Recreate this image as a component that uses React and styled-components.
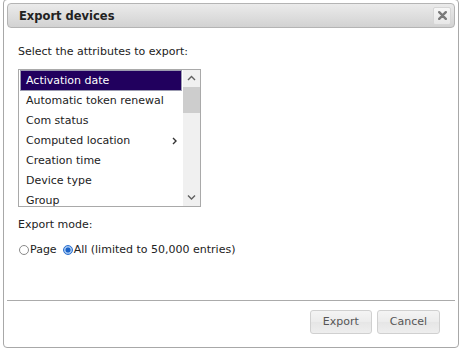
import React from "react";
import styled, { createGlobalStyle } from "styled-components";

const GlobalStyle = createGlobalStyle`
  html, body { margin: 0; padding: 0; background: #fff; }
  body { font-family: "DejaVu Sans", Verdana, sans-serif; font-size: 11px; color: #222; }
`;

const Page = styled.div`
  width: 460px;
  height: 348px;
  overflow: hidden;
  padding-left: 3px;
  box-sizing: border-box;
`;

const Dialog = styled.div`
  margin-top: -1px;
  width: 456px;
  height: 349px;
  box-sizing: border-box;
  border: 1px solid #a8a8a8;
  border-radius: 4px;
  padding: 3px;
  display: flex;
  flex-direction: column;
  background: #fff;
`;

const TitleBar = styled.div`
  height: 25px;
  box-sizing: border-box;
  border: 1px solid #b4b4b4;
  border-radius: 4px;
  background: linear-gradient(#ebebeb, #d2d2d2);
  display: flex;
  align-items: center;
  justify-content: space-between;
  padding: 0 3px 0 11px;
`;

const Title = styled.span`
  font-weight: bold;
  font-size: 11.5px;
  color: #222;
`;

const CloseButton = styled.div`
  width: 18px;
  height: 18px;
  box-sizing: border-box;
  border: 1px solid #d6d6d6;
  border-radius: 2px;
  background: linear-gradient(#f7f7f7, #e7e7e7);
  display: flex;
  align-items: center;
  justify-content: center;
`;

const Content = styled.div`
  flex: 1;
  padding: 17px 11px 0 11px;
  display: flex;
  flex-direction: column;
  align-items: flex-start;
`;

const Label = styled.div`
  line-height: 13px;
  margin-bottom: ${(p) => p.$gap}px;
`;

const ListBox = styled.div`
  width: 183px;
  height: 138px;
  box-sizing: border-box;
  border: 1px solid #a9a9a9;
  display: flex;
  margin-bottom: 11px;
  background: #fff;
`;

const Items = styled.div`
  flex: 1;
  overflow: hidden;
  display: flex;
  flex-direction: column;
`;

const Item = styled.div`
  flex: none;
  height: 20px;
  box-sizing: border-box;
  line-height: 20px;
  padding: 1px 6px 0 6px;
  margin: ${(p) => (p.$selected ? "0 1px 0 1px" : "0")};
  ${(p) =>
    p.$selected
      ? `background: #21005e; color: #fff; border: 1px solid #9b9bb0; line-height: 18px; padding: 0 6px 0 5px; height: 21px; margin-bottom: -1px;`
      : `color: #222; padding-left: 7px;`}
  display: flex;
  justify-content: space-between;
  align-items: center;
  white-space: nowrap;
`;

const ScrollBar = styled.div`
  width: 17px;
  background: #f0f0f0;
  display: flex;
  flex-direction: column;
`;

const ScrollArrow = styled.div`
  height: 17px;
  flex: none;
  display: flex;
  align-items: center;
  justify-content: center;
`;

const Track = styled.div`
  flex: 1;
  display: flex;
  flex-direction: column;
`;

const Thumb = styled.div`
  height: 26px;
  background: #cdcdcd;
`;

const RadioRow = styled.div`
  display: flex;
  align-items: center;
  line-height: 13px;
`;

const RadioOption = styled.label`
  display: inline-flex;
  align-items: center;
  margin-right: ${(p) => p.$gap || 0}px;
`;

const Radio = styled.span`
  width: 10px;
  height: 10px;
  box-sizing: border-box;
  border-radius: 50%;
  margin: 1px 1px 0 1px;
  ${(p) =>
    p.$checked
      ? `border: 1px solid #2a6fd0; background: radial-gradient(circle, #1a62c8 0 2.2px, #9fc3ef 2.8px 100%);`
      : `border: 1px solid #8a8a8a; background: #fff;`}
`;

const ButtonPane = styled.div`
  height: 44px;
  box-sizing: border-box;
  border-top: 1px solid #ababab;
  padding: 9px 15px 0 0;
  display: flex;
  justify-content: flex-end;
  align-items: flex-start;
  gap: 5px;
`;

const Button = styled.button`
  height: 24px;
  padding: 0 12px;
  border: 1px solid #d0d0d0;
  border-radius: 3px;
  background: linear-gradient(#f4f4f4 0%, #ececec 48%, #e6e6e6 52%, #eeeeee 100%);
  color: #555;
  font-family: "DejaVu Sans", Verdana, sans-serif;
  font-size: 11px;
  line-height: 22px;
  cursor: pointer;
`;

const Chevron = ({ dir }) => {
  const d = dir === "up" ? "M1 5 L4.5 1.5 L8 5" : dir === "down" ? "M1 1.5 L4.5 5 L8 1.5" : "M1 1 L4 4 L1 7";
  const w = dir === "right" ? 5 : 9;
  const h = dir === "right" ? 8 : 6.5;
  return (
    <svg width={w} height={h} viewBox={`0 0 ${w} ${h}`}>
      <path d={d} fill="none" stroke={dir === "right" ? "#333" : "#606060"} strokeWidth="1.4" />
    </svg>
  );
};

const items = [
  "Activation date",
  "Automatic token renewal",
  "Com status",
  "Computed location",
  "Creation time",
  "Device type",
  "Group",
];

export default function App() {
  return (
    <>
      <GlobalStyle />
      <Page>
        <Dialog>
          <TitleBar>
            <Title>Export devices</Title>
            <CloseButton>
              <svg width="9" height="9" viewBox="0 0 9 9">
                <path d="M1.2 1.2 L7.8 7.8 M7.8 1.2 L1.2 7.8" stroke="#7a7a7a" strokeWidth="2.4" strokeLinecap="round" />
              </svg>
            </CloseButton>
          </TitleBar>
          <Content>
            <Label $gap={11}>Select the attributes to export:</Label>
            <ListBox>
              <Items>
                {items.map((it, i) => (
                  <Item key={it} $selected={i === 0}>
                    <span>{it}</span>
                    {it === "Computed location" && <Chevron dir="right" />}
                  </Item>
                ))}
              </Items>
              <ScrollBar>
                <ScrollArrow>
                  <Chevron dir="up" />
                </ScrollArrow>
                <Track>
                  <Thumb />
                </Track>
                <ScrollArrow>
                  <Chevron dir="down" />
                </ScrollArrow>
              </ScrollBar>
            </ListBox>
            <Label $gap={12}>Export mode:</Label>
            <RadioRow>
              <RadioOption $gap={5}>
                <Radio />
                Page
              </RadioOption>
              <RadioOption>
                <Radio $checked />
                All (limited to 50,000 entries)
              </RadioOption>
            </RadioRow>
          </Content>
          <ButtonPane>
            <Button>Export</Button>
            <Button>Cancel</Button>
          </ButtonPane>
        </Dialog>
      </Page>
    </>
  );
}
